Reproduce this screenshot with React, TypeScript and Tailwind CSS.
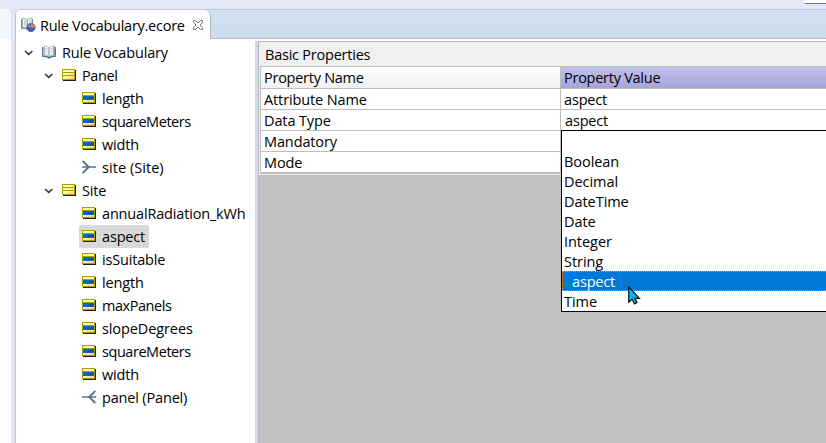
import React from "react";

type Kind = "root" | "class" | "attr" | "refMany" | "refOne";
type Node = { label: string; kind: Kind; selected?: boolean; tracking?: string };

const nodes: Node[] = [
  { label: "Rule Vocabulary", kind: "root" },
  { label: "Panel", kind: "class", tracking: "tracking-[-0.4px]" },
  { label: "length", kind: "attr" },
  { label: "squareMeters", kind: "attr", tracking: "tracking-[-0.45px]" },
  { label: "width", kind: "attr" },
  { label: "site (Site)", kind: "refMany", tracking: "tracking-[0.05px]" },
  { label: "Site", kind: "class" },
  { label: "annualRadiation_kWh", kind: "attr" },
  { label: "aspect", kind: "attr", selected: true },
  { label: "isSuitable", kind: "attr" },
  { label: "length", kind: "attr" },
  { label: "maxPanels", kind: "attr", tracking: "tracking-[-0.45px]" },
  { label: "slopeDegrees", kind: "attr", tracking: "tracking-[-0.1px]" },
  { label: "squareMeters", kind: "attr", tracking: "tracking-[-0.45px]" },
  { label: "width", kind: "attr" },
  { label: "panel (Panel)", kind: "refOne" },
];

const types = ["", "Boolean", "Decimal", "DateTime", "Date", "Integer", "String", "aspect", "Time"];

function Chevron() {
  return (
    <svg width="10" height="6" viewBox="0 0 10 6" className="shrink-0" fill="none" stroke="#333" strokeWidth="1.5">
      <path d="M1 1l3.700 3.400L8.400 1" />
    </svg>
  );
}

function BookIcon() {
  return (
    <svg width="14" height="14" viewBox="0 0 14 14" className="mb-px shrink-0">
      <path d="M.5 2v9.500H5l2 2 2-2h4.500V2" fill="#a9bfe8" stroke="#5574ac" />
      <path d="M2.500 1c2 0 3.500.5 4.500 2 1-1.500 2.500-2 4.500-2v9c-2 0-3.500.5-4.500 2-1-1.500-2.500-2-4.500-2z" fill="#fffdf2" stroke="#9aa7a2" strokeWidth=".7" />
      <path d="M7 3v9" stroke="#6f8fae" />
      <path d="M3.500 3.500h2M3.500 5.500h2M3.500 7.500h2M8.500 3.500h2M8.500 5.500h2M8.500 7.500h2" stroke="#b5c6c8" />
      <path d="M3.500 12H6l1 1.300L8 12h2.500" fill="none" stroke="#238a7c" />
      <path d="M12.200 1v9.500" stroke="#8a7d55" strokeWidth=".8" />
    </svg>
  );
}

function EditorIcon() {
  return (
    <svg width="15" height="16" viewBox="0 0 15 16" className="shrink-0">
      <path d="M.5 2v9.500h4l2 1 5-1V2" fill="#9fb4dc" stroke="#6f88b5" />
      <path d="M1.500 1.500c2-.5 3.500 0 4.700 1.500 1.200-1.500 2.800-2 4.800-1.500v9c-2-.3-3.600 0-4.800 1.500-1.200-1.500-2.700-1.800-4.700-1.500z" fill="#fffbe9" stroke="#8da0b0" strokeWidth=".8" />
      <path d="M6.200 3v8" stroke="#7a8e9c" />
      <path d="M3 4h2M3 6h2M3 8h2M8 4h2" stroke="#aab8b5" />
      <circle cx="10" cy="10.500" r="4.200" fill="#4c5eaa" stroke="#3d4c8d" strokeWidth=".6" />
      <path d="M9.800 6.800v3.700h4a4 4 0 0 0-4-3.700" fill="#d9913c" />
      <path d="M7 10a3 3 0 0 1 2-2.500V10z" fill="#94a4d8" />
    </svg>
  );
}

function ClassIcon() {
  return (
    <svg width="14" height="12" viewBox="0 0 14 12" className="mb-px shrink-0" shapeRendering="crispEdges">
      <path d="M1 1h13v11H1z" fill="#222211" />
      <path d="M0 0h13v11H0z" fill="#a5a200" />
      <path d="M1 1h11v2H1zM1 4h11v2H1zM1 7h11v3H1z" fill="#fff9a8" />
      <path d="M9 4h1v1H9zM11 4h1v1h-1zM8 5h1v1H8zM10 5h1v1h-1zM6 7h1v1H6zM8 7h1v1H8zM10 7h1v1h-1zM5 8h1v1H5zM7 8h1v1H7zM9 8h3v1H9zM4 9h1v1H4zM6 9h1v1H6zM8 9h4v1H8z" fill="#ffd09a" />
    </svg>
  );
}

function AttributeIcon() {
  return (
    <svg width="14" height="12" viewBox="0 0 14 12" className="mb-px shrink-0" shapeRendering="crispEdges">
      <path d="M1 1h13v11H1z" fill="#222211" />
      <path d="M0 0h13v11H0z" fill="#a5a200" />
      <path d="M1 1h11v2H1z" fill="#fff9a8" />
      <path d="M1 4h11v4H1z" fill="#0768cb" />
      <path d="M7 5h1v1H7zM9 5h1v1H9zM11 5h1v1h-1zM6 6h1v1H6zM8 6h1v1H8zM10 6h1v1h-1z" fill="#123c75" />
      <path d="M1 8h11v2H1z" fill="#fff3b0" />
      <path d="M5 8h1v1H5zM7 8h1v1H7zM9 8h1v1H9zM11 8h1v1h-1zM4 9h1v1H4zM6 9h1v1H6zM8 9h4v1H8z" fill="#ffc98e" />
    </svg>
  );
}

function ReferenceIcon({ flip }: { flip?: boolean }) {
  return (
    <svg width="14" height="14" viewBox="0 0 14 14" className={flip ? "mb-px shrink-0 -scale-x-100" : "mb-px shrink-0"} fill="none" stroke="#587289">
      <path d="M0 7h14" strokeWidth="1.500" />
      <path d="M.7.8l6 6.200-6 6.200" strokeWidth="1.900" />
    </svg>
  );
}

function NodeIcon({ kind }: { kind: Kind }) {
  if (kind === "root") return <BookIcon />;
  if (kind === "class") return <ClassIcon />;
  if (kind === "attr") return <AttributeIcon />;
  return <ReferenceIcon flip={kind === "refOne"} />;
}

function TreeRow({ node }: { node: Node }) {
  const pad = node.kind === "root" ? "pl-2" : node.kind === "class" ? "pl-7" : "pl-[63px]";
  const branch = node.kind === "root" || node.kind === "class";
  return (
    <div className={`flex h-[23px] items-center ${pad}`}>
      {branch && <span className="mr-2 flex w-2.5 shrink-0"><Chevron /></span>}
      <div className={`flex h-[23px] items-center gap-1.5 rounded-[2px] ${branch ? "" : "pl-[3px] pr-1"} ${node.selected ? "bg-[#d9d9d9]" : ""}`}>
        <NodeIcon kind={node.kind} />
        <span className={node.tracking ?? ""}>{node.label}</span>
      </div>
    </div>
  );
}

function PropertyRow({ name, value }: { name: string; value: string }) {
  return (
    <div className="flex h-[21px] border-b border-[#bdbdbd] leading-[22px]">
      <div className="w-[300px] shrink-0 border-r border-[#bdbdbd] pl-[3px] tracking-[-0.12px]">{name}</div>
      <div className={name === "Data Type" ? "pl-1" : "pl-[3px]"}>{value}</div>
    </div>
  );
}

export default function App() {
  return (
    <div className="relative flex h-[443px] w-[826px] flex-col overflow-hidden bg-[#e2e7f6] font-['Open_Sans','Noto_Sans',sans-serif] text-[14.500px] tracking-[-0.17px] whitespace-nowrap text-black">
      <div className="flex h-[9px] shrink-0 justify-end bg-[#e4e8f6]">
        <div className="h-1 w-[21px] border-b border-[#777] bg-white" />
      </div>
      <div className="flex min-h-0 flex-1">
        <div className="mr-1 w-[11px] shrink-0 overflow-hidden rounded-tr-md bg-white">
          <div className="h-[30px] bg-[#f5f6fb]" />
        </div>
        <div className="flex min-w-0 flex-1 flex-col overflow-hidden rounded-tl-md border-t border-l border-[#c1c6d3] bg-white">
          <div className="flex h-[29px] shrink-0 bg-gradient-to-b from-[#d1e1ef] to-[#cddceb]">
            <div className="flex w-[195px] shrink-0 items-center rounded-tr-md border-r border-[#afb7ca] bg-white pl-[5px]">
              <EditorIcon />
              <span className="mt-0.5 ml-1 w-[146px] tracking-[-0.26px]">Rule Vocabulary.ecore</span>
              <svg width="12" height="12" viewBox="0 0 12 12" className="ml-1.5" fill="none" stroke="#777">
                <path d="M1.500 1.500h2L6 4l2.500-2.500h2v2L8 6l2.500 2.500v2h-2L6 8l-2.500 2.500h-2v-2L4 6 1.500 3.500z" />
              </svg>
            </div>
            <div className="flex-1 border-b border-[#b1b9cc]" />
          </div>
          <div className="flex min-h-0 flex-1">
            <div className="w-[239px] shrink-0 pt-0.5">
              {nodes.map((node, i) => <TreeRow key={i} node={node} />)}
            </div>
            <div className="mt-0.5 w-[3px] shrink-0 bg-[#cedcee]" />
            <div className="mt-0.5 flex min-w-0 flex-1 flex-col border-t border-l border-[#b8b8b8] bg-[#c0c0c0]">
              <div className="h-6 shrink-0 bg-[#f0f0f0] pl-1.5 leading-[26px] tracking-[-0.23px]">Basic Properties</div>
              <div className="h-[109px] border-b border-[#eee] bg-[#f0f0f0] pl-px">
                <div className="h-[108px] border-y border-l border-[#bdbdbd] bg-white">
                  <div className="flex h-[22px] border-b border-[#bdbdbd] leading-[21px] tracking-[-0.26px]">
                    <div className="w-[300px] shrink-0 border-r border-[#bdbdbd] bg-gradient-to-b from-white to-[#f0f0f0] pl-[3px]">Property Name</div>
                    <div className="flex-1 bg-gradient-to-b from-[#c2c0e9] to-[#a5a4d8] pl-[3px]">Property Value</div>
                  </div>
                  <PropertyRow name="Attribute Name" value="aspect" />
                  <PropertyRow name="Data Type" value="aspect" />
                  <PropertyRow name="Mandatory" value="" />
                  <PropertyRow name="Mode" value="" />
                </div>
              </div>
            </div>
          </div>
        </div>
      </div>

      <div className="absolute top-[130px] left-[561px] h-[182px] w-[270px] border border-black bg-white tracking-[-0.05px]">
        {types.map((type) => (
          <div key={type} className={type === "aspect" ? "h-5 border border-dotted border-[#ff8728] bg-[#0078d7] pl-[9px] leading-5 tracking-[-0.17px] text-white" : "h-5 pl-0.5 leading-[22px]"}>{type}</div>
        ))}
      </div>
      <svg width="13" height="19" viewBox="0 0 13 19" className="absolute top-[286px] left-[628px]">
        <path d="M.7.8v15.400l3.400-3 2.400 4.700 2.500-1.300-2.100-4.300h4.500z" fill="#00b7f1" stroke="#111" strokeWidth="1.200" />
      </svg>
    </div>
  );
}
